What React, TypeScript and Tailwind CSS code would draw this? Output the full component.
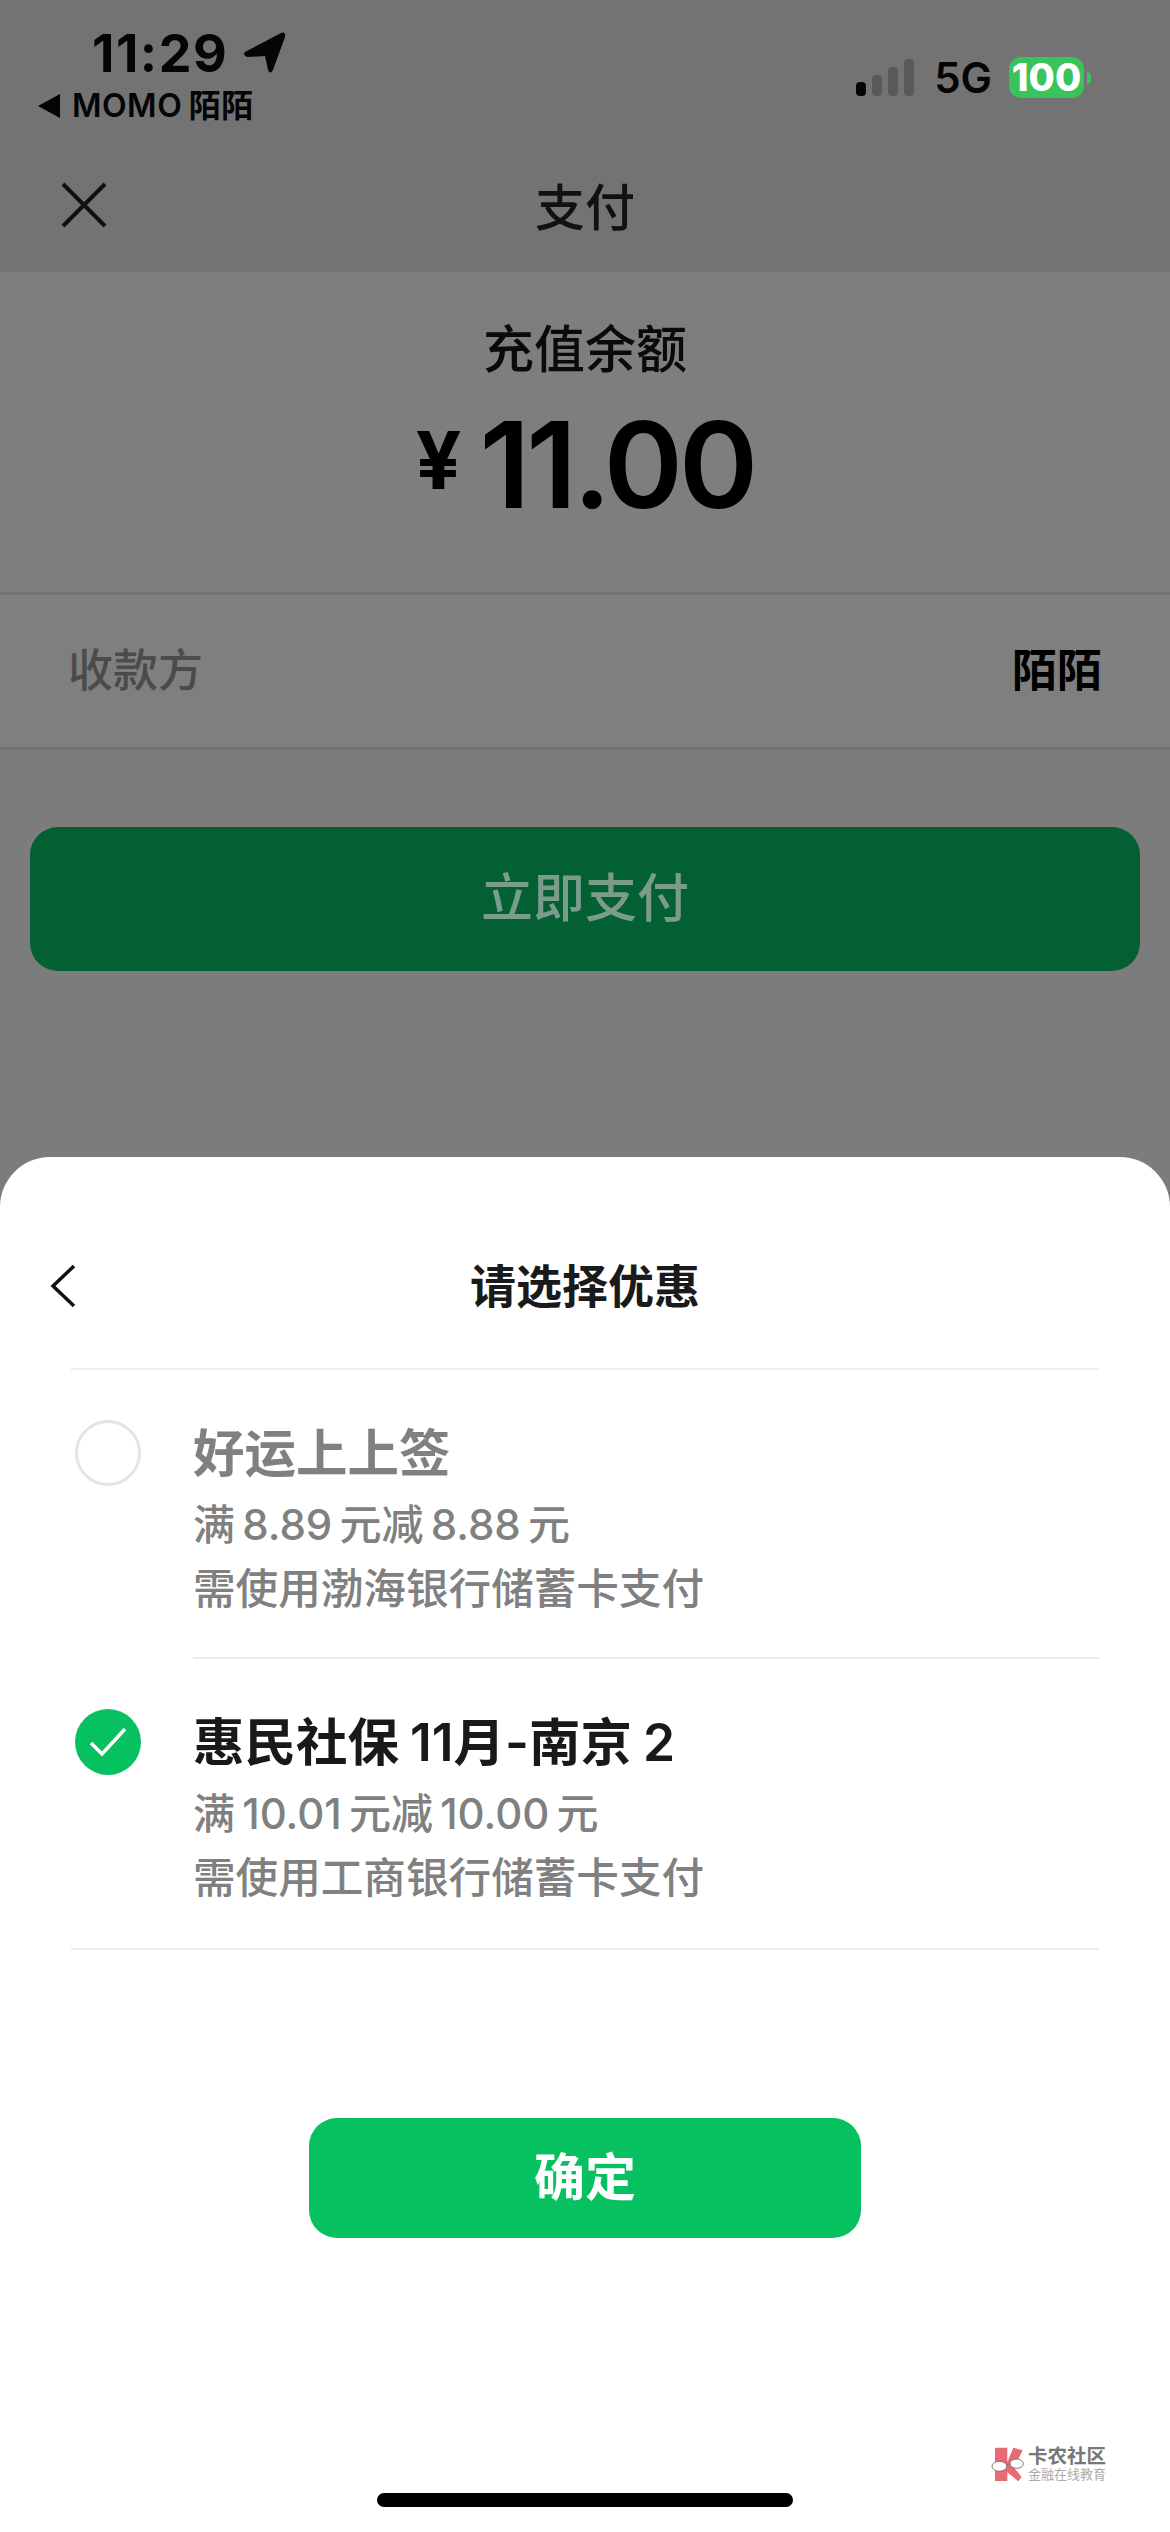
export default function App() {
  const offers = [
    { title: '好运上上签', rule: '满 8.89 元减 8.88 元', bank: '需使用渤海银行储蓄卡支付', checked: false },
    { title: '惠民社保 11月-南京 2', rule: '满 10.01 元减 10.00 元', bank: '需使用工商银行储蓄卡支付', checked: true },
  ]

  return (
    <div className="w-[1170px] h-[2532px] overflow-hidden bg-[#7c7c7c] font-['Inter','Noto_Sans_CJK_SC',sans-serif] text-[#111]">
      {/* Dimmed page */}
      <div className="h-[272px] bg-[#737373]">
        <div className="h-[150px] flex justify-between">
          <div className="pt-[28px]">
            <div className="h-[52px] pl-[92px] flex items-center gap-[16px]">
              <span className="text-[52px] leading-[52px] font-bold tracking-[1.5px] text-[#050505]">11:29</span>
              <svg width="42" height="42" viewBox="0 0 42 42" className="-mt-[2px]">
                <path d="M1 20 L37 1 Q42 -1 41 5 L29 38 Q26 43 24 38 L21 24 L4 25 Q-2 23 1 20 Z" fill="#050505" />
              </svg>
            </div>
            <div className="mt-[6px] h-[40px] pl-[38px] flex items-center gap-[12px]">
              <svg width="22" height="24" viewBox="0 0 22 24">
                <path d="M0 12 L22 0 V24 Z" fill="#050505" />
              </svg>
              <span className="text-[32px] leading-[40px] font-semibold text-[#050505] tracking-[0.5px] [word-spacing:-2px]">MOMO 陌陌</span>
            </div>
          </div>
          <div className="pt-[57px] pr-[79px] flex items-start">
            <div className="h-[39px] flex items-end gap-[6px]">
              <div className="w-[10px] h-[14px] rounded-[4px] bg-[#050505]" />
              <div className="w-[10px] h-[21px] rounded-[4px] bg-[#5a5a5a]" />
              <div className="w-[10px] h-[29px] rounded-[4px] bg-[#5a5a5a]" />
              <div className="w-[10px] h-[37px] rounded-[4px] bg-[#5a5a5a]" />
            </div>
            <span className="ml-[20px] text-[42px] leading-[41px] font-semibold text-[#050505]">5G</span>
            <div className="ml-[17px] w-[75px] h-[41px] rounded-[12px] bg-[#39c35b] flex items-center justify-center text-[38px] leading-[41px] font-extrabold text-white">
              100
            </div>
            <div className="ml-[3px] mt-[15px] w-[4px] h-[12px] rounded-r-[4px] bg-[#39c35b]" />
          </div>
        </div>
        <div className="relative h-[122px] flex items-start justify-center">
          <svg width="46" height="46" viewBox="0 0 46 46" className="absolute left-[61px] top-[32px]">
            <path d="M2 2 L44 44 M44 2 L2 44" stroke="#111" strokeWidth="4" fill="none" />
          </svg>
          <span className="mt-[32px] text-[50px] leading-[52px] font-medium">支付</span>
        </div>
      </div>

      <div className="h-[323px] border-b-[3px] border-[#727272] bg-[#7e7e7e] flex flex-col items-center">
        <span className="mt-[52px] text-[51px] leading-[52px] font-medium text-[#0a0a0a]">充值余额</span>
        <div className="mt-[30px] flex items-start">
          <span className="mt-[14px] text-[80px] leading-[80px] font-bold text-black">¥</span>
          <span className="ml-[18px] text-[120px] leading-[118px] font-semibold text-black tracking-[-4px]">11.00</span>
        </div>
      </div>

      <div className="h-[155px] border-b-[3px] border-[#727272] bg-[#7f7f7f] px-[68px] flex items-center justify-between text-[45px] leading-[50px]">
        <span className="text-[#4b4b4b] font-medium">收款方</span>
        <span className="text-black font-semibold">陌陌</span>
      </div>

      <div className="h-[407px] px-[30px] pt-[77px]">
        <div className="h-[144px] rounded-[28px] bg-[#036033] flex items-center justify-center text-[52px] font-medium text-[#7c9c8b]">
          立即支付
        </div>
      </div>

      {/* Bottom sheet */}
      <div className="h-[1375px] rounded-t-[50px] bg-white flex flex-col">
        <div className="relative h-[213px] mx-[71px] border-b-2 border-[#ececec] flex items-center justify-center">
          <svg width="26" height="44" viewBox="0 0 26 44" className="absolute -left-[21px] top-[107px]">
            <path d="M24 2 L3 22 L24 42" stroke="#111" strokeWidth="3.5" fill="none" />
          </svg>
          <span className="mt-[46px] text-[46px] leading-[50px] font-semibold text-[#1a1a1a]">请选择优惠</span>
        </div>

        {offers.map((offer, index) => (
          <div key={index} className="flex pl-[75px] pr-[70px]">
            <div className="pt-[50px] w-[118px] shrink-0">
              {offer.checked ? (
                <div className="w-[66px] h-[66px] rounded-full bg-[#07c160] flex items-center justify-center">
                  <svg width="38" height="30" viewBox="0 0 38 30">
                    <path d="M2 16 L13 27 L36 2" stroke="white" strokeWidth="3.5" fill="none" />
                  </svg>
                </div>
              ) : (
                <div className="w-[66px] h-[66px] rounded-full border-[3px] border-[#e4e4e4]" />
              )}
            </div>
            <div className={`flex-1 h-[289px] pt-[55px] ${index === 0 ? 'border-b-2 border-[#ececec]' : ''}`}>
              <div className={`text-[51.5px] leading-[56px] font-semibold [word-spacing:-2px] ${offer.checked ? 'text-[#191919]' : 'text-[#808080]'}`}>
                {offer.title}
              </div>
              <div className="mt-[19px] text-[42px] leading-[50px] font-medium text-[#808080] [word-spacing:-4px]">{offer.rule}</div>
              <div className="mt-[14px] text-[42.6px] leading-[50px] font-medium text-[#808080]">{offer.bank}</div>
            </div>
          </div>
        ))}

        <div className="mx-[71px] border-t-2 border-[#ececec]" />

        <div className="mt-[168px] flex justify-center">
          <div className="w-[552px] h-[120px] rounded-[28px] bg-[#07c160] flex items-center justify-center text-[51px] font-bold text-white">
            确定
          </div>
        </div>

        <div className="relative mt-[255px] flex justify-center">
          <div className="w-[416px] h-[14px] rounded-full bg-black" />
          {/* Watermark over the page corner */}
          <div className="absolute left-[990px] -top-[47px] flex items-center gap-[3px]">
            <svg width="35" height="35" viewBox="0 0 105 105">
              <path d="M15 2 H52 V45 L70 2 L98 10 L72 62 L95 90 L85 103 L52 76 V102 H15 Z" fill="#e86a75" />
              <ellipse cx="28" cy="58" rx="22" ry="15" fill="white" stroke="#777" strokeWidth="3" />
              <ellipse cx="80" cy="50" rx="20" ry="14" fill="white" stroke="#777" strokeWidth="3" />
              <path d="M50 55 Q55 50 60 52" stroke="#777" strokeWidth="3" fill="none" />
            </svg>
            <div className="flex flex-col">
              <span className="text-[19.5px] leading-[21px] font-bold text-[#777]">卡农社区</span>
              <span className="text-[13px] leading-[15px] text-[#aaa]">金融在线教育</span>
            </div>
          </div>
        </div>
      </div>
    </div>
  )
}
